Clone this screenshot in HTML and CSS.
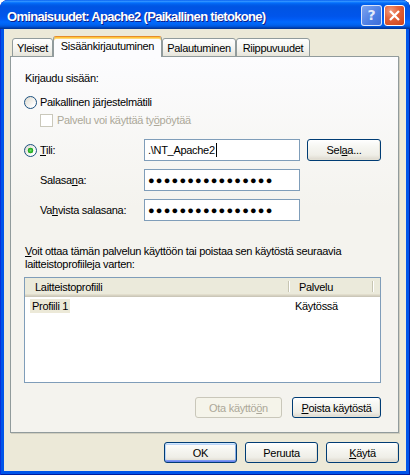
FILE: index.html
```html
<!DOCTYPE html>
<html lang="fi">
<head>
<meta charset="utf-8">
<title>Ominaisuudet: Apache2 (Paikallinen tietokone)</title>
<link rel="stylesheet" href="styles.css">
</head>
<body>
<div class="window">
  <div class="titlebar">
    <span class="title">Ominaisuudet: Apache2 (Paikallinen tietokone)</span>
    <div class="caption-buttons">
      <span class="cap-btn help">?</span>
      <span class="cap-btn close"><svg width="19" height="19" viewBox="0 0 19 19"><path d="M5 5 L14 14 M14 5 L5 14" stroke="#fff" stroke-width="2.3" fill="none"/></svg></span>
    </div>
  </div>
  <div class="client">
    <div class="tabs">
      <span class="tab tab-yleiset">Yleiset</span>
      <span class="tab tab-active">Sisäänkirjautuminen</span>
      <span class="tab tab-palautuminen">Palautuminen</span>
      <span class="tab tab-riippuvuudet">Riippuvuudet</span>
    </div>
    <div class="panel">
      <div class="row row-heading">Kirjaudu sisään:</div>
      <div class="row row-radio"><span class="radio"></span><span>Paikallinen <u>j</u>ärjestelmätili</span></div>
      <div class="row row-check disabled"><span class="checkbox"></span><span>Palvelu voi käyttää ty<u>ö</u>pöytää</span></div>
      <div class="form">
        <div class="label-cell"><span class="radio checked"></span><span><u>T</u>ili:</span></div>
        <div class="input">.\NT_Apache2<span class="caret"></span></div>
        <button class="btn btn-browse">Sel<u>a</u>a...</button>
        <div class="label-cell indent"><span>Salasa<u>n</u>a:</span></div>
        <div class="input password">●●●●●●●●●●●●●●●●</div>
        <div></div>
        <div class="label-cell indent"><span>Va<u>h</u>vista salasana:</span></div>
        <div class="input password">●●●●●●●●●●●●●●●●</div>
        <div></div>
      </div>
      <p class="desc"><u>V</u>oit ottaa tämän palvelun käyttöön tai poistaa sen käytöstä seuraavia<br>laitteistoprofiileja varten:</p>
      <div class="listview">
        <div class="lv-header">
          <span class="lv-col lv-col1">Laitteistoprofiili</span>
          <span class="lv-col lv-col2">Palvelu</span>
          <span class="lv-col lv-col3"></span>
        </div>
        <div class="lv-row">
          <span class="lv-cell lv-cell1"><span class="lv-sel">Profiili 1</span></span>
          <span class="lv-cell lv-cell2">Käytössä</span>
        </div>
      </div>
      <div class="panel-buttons">
        <button class="btn btn-enable" disabled>Ota käyttö<u>ö</u>n</button>
        <button class="btn btn-disable"><u>P</u>oista käytöstä</button>
      </div>
    </div>
    <div class="footer">
      <button class="btn btn-footer btn-default">OK</button>
      <button class="btn btn-footer">Peruuta</button>
      <button class="btn btn-footer"><u>K</u>äytä</button>
    </div>
  </div>
</div>
</body>
</html>
```

FILE: styles.css
```css
* { box-sizing: border-box; }
html, body { margin: 0; padding: 0; }
body {
  width: 410px;
  height: 475px;
  overflow: hidden;
  background: #ffffff;
  font-family: "Liberation Sans", Arial, sans-serif;
  font-size: 11px;
  letter-spacing: -0.3px;
  color: #000;
}
u { text-decoration: underline; text-underline-offset: 1px; }

.window {
  width: 410px;
  height: 475px;
  display: flex;
  flex-direction: column;
  background: #0055EA;
  border-radius: 8px 8px 0 0;
  overflow: hidden;
  box-shadow: inset 1px 0 0 #0831D9, inset -1px 0 0 #001EA0, inset 0 -1px 0 #001EA0;
}

.titlebar {
  height: 29px;
  flex: none;
  display: flex;
  align-items: center;
  padding: 1px 5px 0 7px;
  background: linear-gradient(to bottom, #0058EE 0%, #3593FF 4%, #288EFF 6%, #127DFF 8%, #036FFC 10%, #0262EE 14%, #0057E5 20%, #0054E3 24%, #0055EB 56%, #005BF5 66%, #026AFE 76%, #0062EF 86%, #0052D6 92%, #0040AB 96%, #003092 100%);
  border-radius: 8px 8px 0 0;
}
.title {
  flex: 1;
  color: #fff;
  font-weight: bold;
  font-size: 13px;
  letter-spacing: -0.7px;
  text-shadow: 1px 1px 0 #0F1F8A;
  white-space: nowrap;
  padding-top: 2px;
}
.caption-buttons { display: flex; gap: 2px; }
.cap-btn {
  width: 21px;
  height: 21px;
  border: 1px solid #fff;
  border-radius: 3px;
  display: flex;
  align-items: center;
  justify-content: center;
}
.help {
  background: linear-gradient(135deg, #7DA3EE, #4C7EE4 60%, #3D6ED9);
  color: rgba(255,255,255,0.85);
  font-family: "DejaVu Sans", sans-serif;
  font-weight: bold;
  font-size: 14px;
  letter-spacing: 0;
  border-color: rgba(255,255,255,0.8);
}
.close {
  background: radial-gradient(circle at 30% 25%, #F29B7E 0, #E4633B 40%, #CC4216 100%);
}

.client {
  flex: 1;
  margin: 0 4px 4px 4px;
  background: #ECE9D8;
  padding: 7px 7px 0 6px;
  display: flex;
  flex-direction: column;
}

.tabs {
  display: flex;
  align-items: flex-end;
  height: 21px;
  padding-left: 2px;
  margin-bottom: -1px;
  position: relative;
  z-index: 1;
}
.tab {
  height: 19px;
  display: flex;
  align-items: center;
  justify-content: center;
  border: 1px solid #919B9C;
  border-radius: 3px 3px 0 0;
  background: linear-gradient(#FFFFFF, #F3F3EF 60%, #E6E4DA);
  white-space: nowrap;
}
.tab-yleiset { width: 41px; }
.tab-palautuminen { width: 74px; }
.tab-riippuvuudet { width: 74px; }
.tab-active {
  width: 109px;
  height: 21px;
  border-bottom: none;
  border-top-color: #E68B2C;
  background: #FCFCFE;
  box-shadow: inset 0 1px 0 #FFC73C, inset 0 2px 0 #FFD77A;
  padding-bottom: 2px;
}

.panel {
  height: 377px;
  flex: none;
  border: 1px solid #919B9C;
  background: linear-gradient(#FCFCFE, #F4F3EE 40%, #F4F3EE);
  box-shadow: 1px 1px 0 #D0CEBF;
  padding: 14px 17px 0 13px;
  display: flex;
  flex-direction: column;
}

.row { display: flex; align-items: center; }
.row-heading { height: 13px; padding-left: 1px; }
.row-radio { height: 16px; margin-top: 10px; gap: 3px; }
.row-check { height: 16px; margin-top: 2px; padding-left: 16px; gap: 4px; }
.disabled { color: #ACA899; }

.radio {
  width: 13px;
  height: 13px;
  flex: none;
  border-radius: 50%;
  border: 1px solid #1C5180;
  background: linear-gradient(135deg, #DCD9CE, #FFFFFF 80%);
}
.radio.checked {
  background: radial-gradient(circle at 50% 50%, #6EE06A 0, #2DB52A 1.8px, #21A121 2.6px, transparent 3.1px), linear-gradient(135deg, #DCD9CE, #FFFFFF 80%);
}
.checkbox {
  width: 13px;
  height: 13px;
  flex: none;
  border: 1px solid #CAC8BB;
  background: #FFFFFF;
}

.form {
  margin-top: 11px;
  display: grid;
  grid-template-columns: 113px 156px 74px;
  grid-auto-rows: 22px;
  column-gap: 7px;
  row-gap: 8px;
}
.label-cell { display: flex; align-items: center; gap: 3px; white-space: nowrap; }
.label-cell.indent { padding-left: 16px; }
.input {
  border: 1px solid #7F9DB9;
  background: #fff;
  display: flex;
  align-items: center;
  padding-left: 3px;
  white-space: nowrap;
  overflow: hidden;
}
.caret { width: 1px; height: 14px; background: #000; margin-left: 1px; }
.password {
  font-family: "Liberation Sans", Arial, sans-serif;
  font-size: 11px;
  letter-spacing: 1.2px;
  padding-left: 3px;
}

.btn {
  height: 21px;
  padding: 0;
  margin: 0;
  font: inherit;
  letter-spacing: inherit;
  color: #000;
  border: 1px solid #003C74;
  border-radius: 3px;
  background: linear-gradient(#FFFFFF, #F7F7F3 30%, #EFEEE7 75%, #DCD7CC);
  box-shadow: inset -1px -1px 0 #E3E0D4;
  display: flex;
  align-items: center;
  justify-content: center;
}
.btn-browse { height: 22px; }
.btn:disabled {
  border-color: #C9C7BA;
  background: #F5F4EA;
  color: #ACA899;
  box-shadow: none;
}
.btn-default {
  box-shadow: inset 0 1px 0 #CEE7FF, inset 0 -1px 0 #6982EE, inset 1px 0 0 #B7D4F9, inset -1px 0 0 #89ADE4, inset 0 2px 0 #BCD4F6, inset 0 -2px 0 #7D99F1;
}

.desc { margin: 24px 0 0 0; padding-left: 1px; line-height: 13px; }

.listview {
  margin-top: 6px;
  width: 357px;
  height: 106px;
  border: 1px solid #7F9DB9;
  background: #fff;
}
.lv-header {
  display: flex;
  height: 19px;
  background: #EBEADB;
  box-shadow: inset 0 -1px 0 #CBC7B8, inset 0 -2px 0 #D6D2C2, inset 0 -3px 0 #E2DECD;
}
.lv-col {
  display: flex;
  align-items: center;
  padding-bottom: 2px;
  position: relative;
}
.lv-col1 { width: 264px; padding-left: 10px; }
.lv-col2 { width: 84px; padding-left: 10px; }
.lv-col1::after, .lv-col2::after {
  content: "";
  position: absolute;
  right: 0;
  top: 3px;
  bottom: 5px;
  width: 1px;
  background: #C7C5B2;
  box-shadow: 1px 0 0 #FFFFFF;
}
.lv-row { display: flex; height: 15px; margin-top: 1px; }
.lv-cell { display: flex; align-items: center; }
.lv-cell1 { width: 264px; padding-left: 5px; }
.lv-sel { background: #ECE9D8; padding: 1px 2px; }
.lv-cell2 { padding-left: 6px; }

.panel-buttons {
  margin-top: 14px;
  display: flex;
  justify-content: flex-end;
  gap: 10px;
}
.btn-enable { width: 87px; }
.btn-disable { width: 89px; }

.footer {
  margin-top: 9px;
  display: flex;
  justify-content: flex-end;
  gap: 8px;
}
.btn-footer { width: 73px; }
```
